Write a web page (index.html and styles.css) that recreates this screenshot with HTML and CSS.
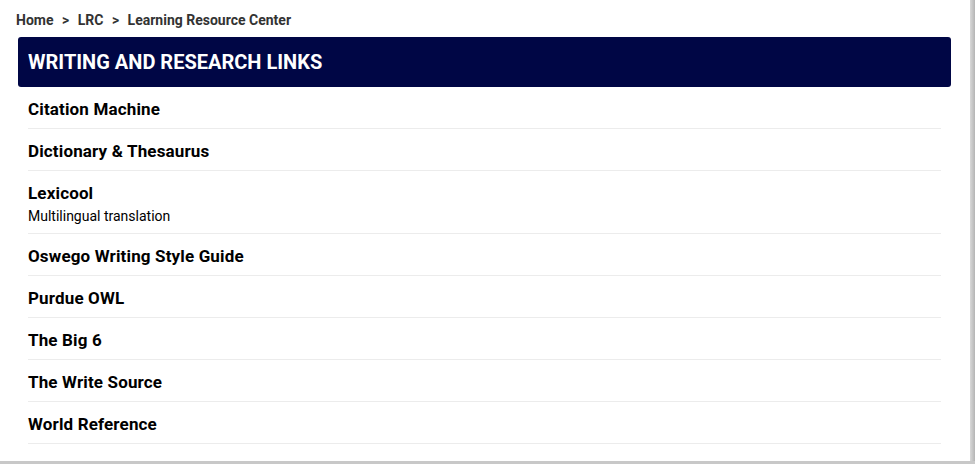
FILE: index.html
```html
<!DOCTYPE html>
<html lang="en">
<head>
  <meta charset="UTF-8">
  <title>Writing and Research Links</title>
  <link rel="stylesheet" href="styles.css">
</head>
<body>
  <div class="page">
    <div class="breadcrumb">
      <a href="#">Home</a>
      <span class="sep">&gt;</span>
      <a href="#">LRC</a>
      <span class="sep">&gt;</span>
      <span>Learning Resource Center</span>
    </div>

    <div class="panel">
      <h2 class="panel-title">WRITING AND RESEARCH LINKS</h2>
      <ul class="link-list">
        <li><a href="#">Citation Machine</a></li>
        <li><a href="#">Dictionary &amp; Thesaurus</a></li>
        <li>
          <a href="#">Lexicool</a>
          <div class="desc">Multilingual translation</div>
        </li>
        <li><a href="#">Oswego Writing Style Guide</a></li>
        <li><a href="#">Purdue OWL</a></li>
        <li><a href="#">The Big 6</a></li>
        <li><a href="#">The Write Source</a></li>
        <li><a href="#">World Reference</a></li>
      </ul>
    </div>
  </div>
</body>
</html>
```

FILE: styles.css
```css
html {
  background: #c8c8c8;
}
body {
  margin: 0;
  font-family: Roboto, "Liberation Sans", Arial, sans-serif;
  background: linear-gradient(to right, #fff 0, #fff 970px, #d8d8d8 970px, #b4b4b4 975px);
  color: #000;
}
.page {
  width: 970px;
  height: 461px;
  background: #fff;
  box-sizing: border-box;
  padding: 11px 19px 0 18px;
}
.breadcrumb {
  font-size: 14px;
  font-weight: bold;
  color: #333;
  line-height: 18px;
  margin-left: -2px;
}
.breadcrumb a {
  color: #333;
  text-decoration: none;
}
.breadcrumb .sep {
  margin: 0 5px;
}
.panel {
  margin-top: 8px;
}
.panel-title {
  margin: 0;
  background-color: #000645;
  color: #fff;
  font-size: 20px;
  font-weight: bold;
  line-height: 50px;
  height: 50px;
  padding: 0 10px;
  border-radius: 3px;
}
.link-list {
  list-style: none;
  margin: 0 10px;
  padding: 0;
}
.link-list li {
  padding: 12px 0 9px;
  border-bottom: 1px solid #ececec;
}
.link-list a {
  display: block;
  color: #000;
  text-decoration: none;
  font-size: 17px;
  font-weight: bold;
  letter-spacing: 0.15px;
  line-height: 20px;
}
.link-list .desc {
  font-size: 14px;
  line-height: 16px;
  margin-top: 5px;
}
```
